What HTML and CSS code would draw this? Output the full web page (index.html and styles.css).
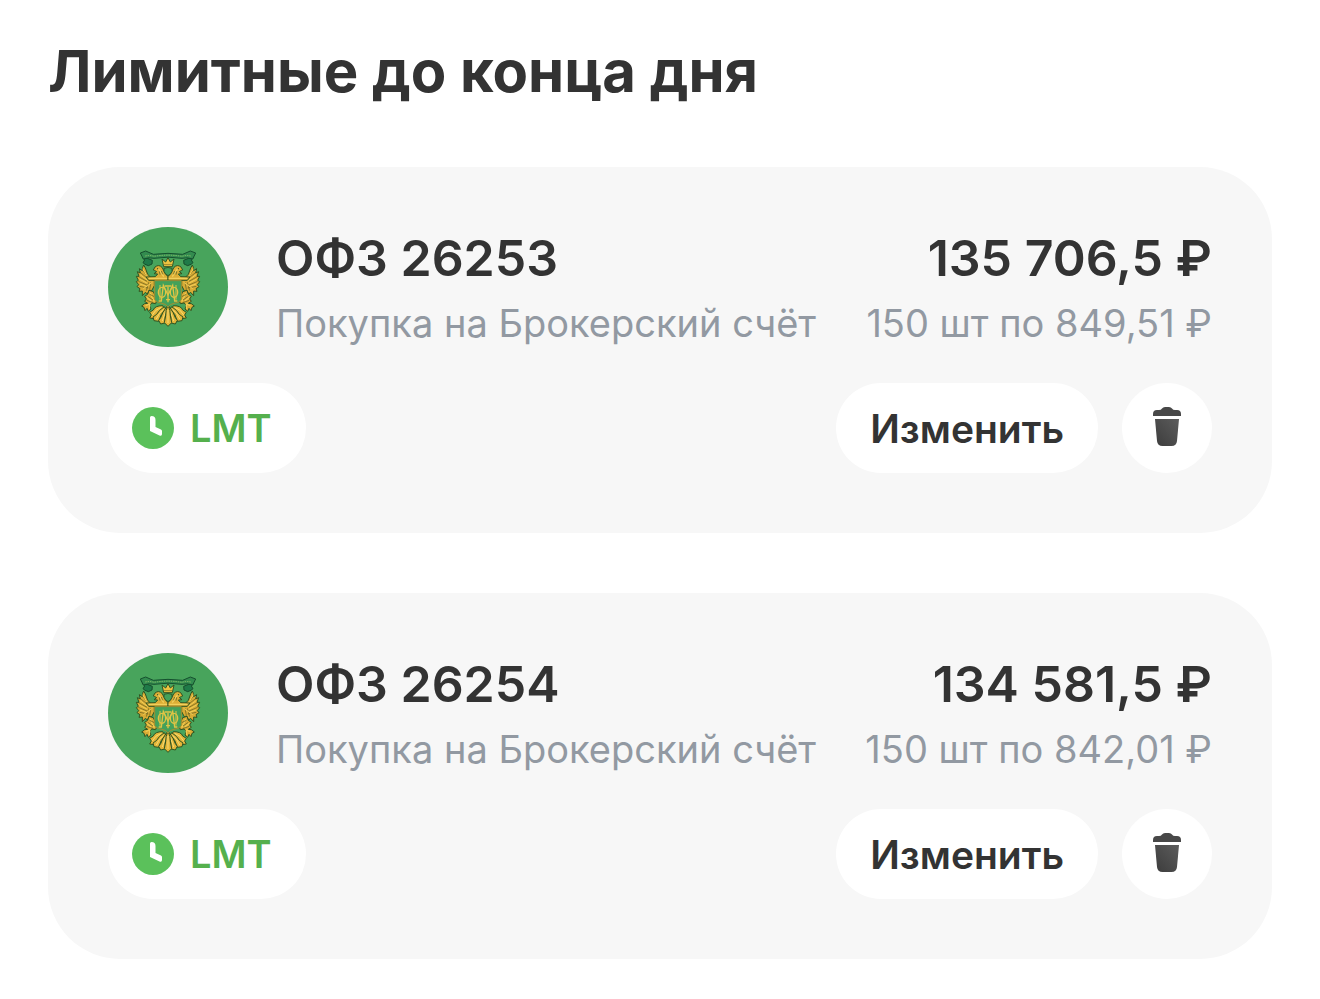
FILE: index.html
```html
<!DOCTYPE html>
<html lang="ru">

<head>
  <meta charset="UTF-8">
  <meta name="viewport" content="width=device-width, initial-scale=1.0">
  <title>Лимитные заявки</title>
  <link rel="stylesheet" href="styles.css">
</head>

<body>
  <!-- общие иконки -->
  <svg class="sprite" aria-hidden="true">
    <defs>
      <linearGradient id="trash-fill" x1="0" y1="1" x2="1" y2="0">
        <stop offset="0" stop-color="#3c3c3c" />
        <stop offset="1" stop-color="#5c5c5c" />
      </linearGradient>

      <!-- левая половина орла, правая отражается -->
      <g id="half">
        <path fill="#1f7a48" stroke="#174d2c" stroke-width="3" d="M126 110 L142 114 L157 120 L156 131 L145 136 L135 132 L129 127 L134 119 Z" />
        <path fill="#d9ac35" stroke="#2f5422" stroke-width="3" stroke-linejoin="round" d="M131 134 Q126 142 127 151 L118 145 L121 158 L112 154 L117 168 L109 168 L115 180 L109 184 L116 193 L111 199 L120 205 L117 213 L127 212 L127 226 L136 216 L142 221 L148 209 L155 211 L163 196 L163 178 L153 172 L143 162 L136 143 Z" />
        <path fill="none" stroke="#5d5a1e" stroke-width="2" d="M119 155 L139 171 M116 169 L141 183 M115 183 L141 194 M119 198 L145 203 M129 151 L143 169 M146 186 L139 211 M153 186 L149 207" />
        <path fill="none" stroke="#f3cf58" stroke-width="3" d="M128 145 L145 174 M120 163 L143 180 M118 176 L142 189 M120 191 L139 198 M130 205 L157 186" />
        <path fill="#dcae36" stroke="#2f5422" stroke-width="3" stroke-linejoin="round" d="M160 149 L165 140 Q176 131 186 141 L192 152 L197 162 L204 168 L204 180 L146 180 L138 170 L166 169 L173 161 L162 160 L170 154 L163 150 Z" />
        <path fill="none" stroke="#f3d05c" stroke-width="4" d="M174 144 L183 156 L191 169 M146 174 L202 174" />
        <circle cx="173" cy="145" r="2" fill="#305023" />
        <path fill="none" stroke="#4b5821" stroke-width="2" d="M178 153 L180 163 M184 152 L188 162" />
        <!-- лапа -->
        <path fill="#d9aa34" stroke="#2f5422" stroke-width="3" stroke-linejoin="round" d="M147 210 L160 214 L166 228 L169 243 L167 250 L155 248 L149 256 L153 266 L145 273 L141 264 L135 271 L132 261 L125 257 L134 250 L143 249 L134 243 L139 236 L134 228 L143 222 Z" />
        <path fill="none" stroke="#f0ca51" stroke-width="4" d="M151 217 L157 233 L163 244 M141 231 L154 243 M137 256 L149 251 L148 266" />
        <path fill="none" stroke="#4b5821" stroke-width="2" d="M143 228 L159 239 M149 222 L163 229 M140 240 L160 247" />
        <!-- хвост -->
        <g fill="#e3b63a" stroke="#2f5422" stroke-width="3" stroke-linejoin="round">
          <path d="M188 256 Q164 256 160 269 L149 276 L154 284 L149 293 L162 295 Q172 274 192 264 Z" />
          <path d="M193 259 Q176 270 170 282 L159 290 L162 301 L176 303 Q181 281 197 266 Z" />
          <path d="M200 259 Q186 278 182 292 L176 300 L182 311 L195 308 Q192 287 204 267 Z" />
        </g>
        <path fill="none" stroke="#f8da70" stroke-width="3" d="M184 261 Q165 267 157 284 M190 267 Q175 280 169 296 M197 272 L187 302" />
      </g>

      <symbol id="emblem" viewBox="24 20 360 360">
        <circle cx="204" cy="200" r="180" fill="#48a45c" />
        <use href="#half" />
        <use href="#half" transform="matrix(-1 0 0 1 408 0)" />
        <path fill="#e3b63a" stroke="#2f5422" stroke-width="3" d="M204 254 Q196 271 197 286 L193 307 L204 318 L215 307 L211 286 Q212 271 204 254 Z" />
        <path stroke="#f8da70" stroke-width="3" d="M204 269 L204 308" />
        <!-- лента -->
        <path fill="#338c4f" stroke="#154f2e" stroke-width="3" stroke-linejoin="round" d="M121 98 L137 92 L160 102 Q204 96 248 102 L271 92 L287 98 L278 116 Q260 110 246 114 Q204 107 162 114 Q148 110 130 116 Z" />
        <path fill="none" stroke="#8bbf69" stroke-width="3" stroke-dasharray="4 3" d="M136 107 Q150 104 162 108 Q204 101 246 108 Q258 104 272 107" />
        <!-- корона и щит -->
        <path fill="#edc341" stroke="#315423" stroke-width="3" stroke-linejoin="round" d="M191 139 L186 116 L197 125 L204 112 L211 125 L222 116 L217 139 Z" />
        <path stroke="#6e6524" stroke-width="2" d="M192 133 L216 133" />
        <path fill="#43a15a" stroke="#30572a" stroke-width="3" d="M192 144 Q204 139 216 144 L216 153 Q213 162 204 166 Q195 162 192 153 Z" />
        <path fill="#43a15a" stroke="#a28f32" stroke-width="3" d="M164 181 L244 181 L244 237 Q239 248 222 249 Q209 251 204 260 Q199 251 186 249 Q169 248 164 237 Z" />
        <!-- вензель -->
        <g fill="none" stroke="#e0c445" stroke-width="4">
          <path d="M176 242 L184 242 L190 195 L204 224 L218 195 L224 242 L232 242" />
          <path d="M204 200 L204 246 M194 197 L214 197 M198 238 L210 238" />
          <ellipse cx="186" cy="216" rx="11" ry="15" />
          <ellipse cx="222" cy="216" rx="11" ry="15" />
          <path d="M180 194 L180 238 M228 194 L228 238" stroke-width="3" />
        </g>
      </symbol>

      <symbol id="clock" viewBox="0 0 42 42">
        <circle cx="21" cy="21" r="21" fill="#5bc15b" />
        <path fill="#fff" d="M18 10.500 Q18 9 19.500 9 Q23.500 9 23.500 13 L23.500 20 L29 22.500 Q30 23 30 24 L30 27 Q30 29.500 27.500 28.500 L18 24 Z" />
      </symbol>

      <symbol id="trash" viewBox="0 0 28 42">
        <path fill="#484848" d="M0 9 V7 Q0 3 4 3 H6 Q8 3 9 1.500 Q10 0 12 0 H16 Q18 0 19 1.500 Q20 3 22 3 H24 Q28 3 28 7 V9 Z" />
        <path fill="url(#trash-fill)" d="M2 12 H26 L24 34 Q23.500 39 18.500 39 H9.500 Q4.500 39 4 34 Z" />
      </symbol>
    </defs>
  </svg>

  <main class="orders">
    <h1 class="title">Лимитные до конца дня</h1>

    <article class="card">
      <div class="info">
        <svg class="logo" aria-hidden="true"><use href="#emblem" /></svg>
        <div class="lines">
          <div class="line main-line">
            <h2 class="name">ОФЗ 26253</h2>
            <span>135 706,5 ₽</span>
          </div>
          <div class="line sub-line">
            <span>Покупка на Брокерский счёт</span>
            <span>150 шт по 849,51 ₽</span>
          </div>
        </div>
      </div>
      <div class="actions">
        <span class="badge">
          <svg class="clock" aria-hidden="true"><use href="#clock" /></svg>
          LMT
        </span>
        <button type="button" class="edit">Изменить</button>
        <button type="button" class="delete" aria-label="Удалить">
          <svg class="trash" aria-hidden="true"><use href="#trash" /></svg>
        </button>
      </div>
    </article>

    <article class="card">
      <div class="info">
        <svg class="logo" aria-hidden="true"><use href="#emblem" /></svg>
        <div class="lines">
          <div class="line main-line">
            <h2 class="name">ОФЗ 26254</h2>
            <span>134 581,5 ₽</span>
          </div>
          <div class="line sub-line">
            <span>Покупка на Брокерский счёт</span>
            <span>150 шт по 842,01 ₽</span>
          </div>
        </div>
      </div>
      <div class="actions">
        <span class="badge">
          <svg class="clock" aria-hidden="true"><use href="#clock" /></svg>
          LMT
        </span>
        <button type="button" class="edit">Изменить</button>
        <button type="button" class="delete" aria-label="Удалить">
          <svg class="trash" aria-hidden="true"><use href="#trash" /></svg>
        </button>
      </div>
    </article>
  </main>
</body>

</html>
```
FILE: styles.css
```css
* {
  margin: 0;
  padding: 0;
  box-sizing: border-box;
}

body {
  background-color: #fff;
  color: #333;
  font-family: Inter, "Liberation Sans", sans-serif;
}

.sprite {
  display: block;
  width: 0;
  height: 0;
}

.orders {
  padding: 35px 48px 40px;
}

.title {
  margin-bottom: 60px;
  font-size: 58px;
  font-weight: 700;
  line-height: 72px;
}

.card {
  padding: 60px;
  border-radius: 72px;
  background-color: #f7f7f7;
}

.card + .card {
  margin-top: 60px;
}

.info {
  display: flex;
  gap: 48px;
}

.logo {
  flex: none;
  width: 120px;
  height: 120px;
}

.lines {
  flex: 1;
}

.line {
  display: flex;
  justify-content: space-between;
  white-space: nowrap;
}

.main-line {
  font-size: 50px;
  font-weight: 600;
  line-height: 62px;
}

.name {
  font-size: inherit;
  font-weight: inherit;
}

.sub-line {
  color: #9299a2;
  font-size: 38px;
  line-height: 68px;
}

/* нижний ряд с кнопками */
.actions {
  display: flex;
  gap: 24px;
  height: 90px;
  margin-top: 26px;
}

.badge,
.edit,
.delete {
  display: flex;
  align-items: center;
  justify-content: center;
  border: none;
  border-radius: 45px;
  background-color: #fff;
  color: #333;
  font-family: inherit;
  font-size: 38px;
  font-weight: 600;
}

.badge {
  gap: 16px;
  margin-right: auto;
  padding: 0 34px 0 24px;
  color: #55b04d;
}

.clock {
  width: 42px;
  height: 42px;
}

.edit {
  padding: 0 34px;
  font-size: 39px;
  cursor: pointer;
}

.delete {
  width: 90px;
  cursor: pointer;
}

.trash {
  width: 28px;
  height: 42px;
}
```
